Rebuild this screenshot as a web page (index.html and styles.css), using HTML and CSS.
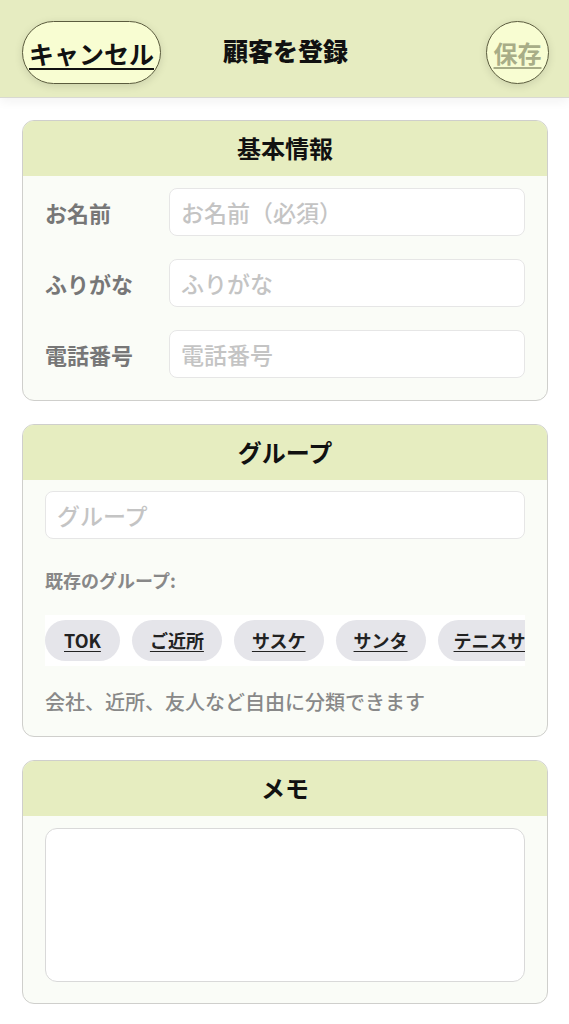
FILE: index.html
```html
<!DOCTYPE html>
<html lang="ja">
<head>
<meta charset="utf-8">
<title>顧客を登録</title>
<link rel="stylesheet" href="styles.css">
</head>
<body>
<header class="topbar">
  <div class="topbar-left"><button class="btn-cancel">キャンセル</button></div>
  <h1 class="topbar-title">顧客を登録</h1>
  <div class="topbar-right"><button class="btn-save">保存</button></div>
</header>
<main class="content">
  <section class="card">
    <h2 class="card-head">基本情報</h2>
    <div class="card-body form-grid">
      <label class="field-label">お名前</label>
      <input class="field-input" type="text" placeholder="お名前（必須）">
      <label class="field-label">ふりがな</label>
      <input class="field-input" type="text" placeholder="ふりがな">
      <label class="field-label">電話番号</label>
      <input class="field-input" type="text" placeholder="電話番号">
    </div>
  </section>
  <section class="card">
    <h2 class="card-head">グループ</h2>
    <div class="card-body group-body">
      <input class="field-input" type="text" placeholder="グループ">
      <div class="existing-label">既存のグループ:</div>
      <div class="chip-strip">
        <span class="chip chip-first">TOK</span>
        <span class="chip">ご近所</span>
        <span class="chip">サスケ</span>
        <span class="chip">サンタ</span>
        <span class="chip chip-last">テニスサ</span>
      </div>
      <p class="hint">会社、近所、友人など自由に分類できます</p>
    </div>
  </section>
  <section class="card">
    <h2 class="card-head">メモ</h2>
    <div class="card-body memo-body">
      <textarea class="memo"></textarea>
    </div>
  </section>
</main>
</body>
</html>
```
FILE: styles.css
```css
* { box-sizing: border-box; }
body {
  margin: 0;
  background: #ffffff;
  font-family: "Noto Sans CJK JP", "Noto Sans", sans-serif;
  color: #111;
}
.topbar {
  height: 98px;
  background: #e6ecc1;
  border-bottom: 1px solid #d9d9d2;
  box-shadow: 0 4px 10px rgba(0,0,0,0.05);
  display: grid;
  grid-template-columns: 1fr auto 1fr;
  align-items: center;
  padding: 8px 20px 0 22px;
}
.topbar-left { display: flex; justify-content: flex-start; }
.topbar-right { display: flex; justify-content: flex-end; }
.topbar-title {
  margin: 0 0 6px;
  font-size: 25px;
  font-weight: 900;
  color: #111;
}
.btn-cancel, .btn-save {
  font-family: inherit;
  font-weight: 700;
  text-decoration: underline;
  text-underline-offset: 4px;
  text-decoration-thickness: 2px;
  background: #f8fdd2;
  border: 1px solid #5b5c3e;
  box-shadow: 0 2px 8px rgba(0,0,0,0.12);
  padding: 0;
  cursor: pointer;
}
.btn-cancel {
  width: 139px;
  height: 63px;
  border-radius: 32px;
  font-size: 25px;
  color: #111;
}
.btn-save {
  width: 63px;
  height: 63px;
  border-radius: 50%;
  font-size: 24px;
  color: #a8ad87;
}
.content {
  padding: 22px 21px 22px 22px;
  display: flex;
  flex-direction: column;
  gap: 23px;
}
.card {
  border: 1.5px solid #cfcfcc;
  border-radius: 12px;
  background: #fafcf7;
  overflow: hidden;
}
.card-head {
  margin: 0;
  height: 55px;
  background: #e6edc0;
  font-size: 24px;
  font-weight: 700;
  text-align: center;
  line-height: 54px;
  color: #111;
}
.card-body {
  padding: 12px 22px 22px 22px;
}
.form-grid {
  display: grid;
  grid-template-columns: 124px 1fr;
  row-gap: 23px;
  align-items: center;
}
.field-label {
  font-size: 22px;
  font-weight: 700;
  color: #777;
}
.field-input {
  width: 100%;
  height: 48px;
  border: 1px solid #e6e6e6;
  border-radius: 8px;
  background: #fff;
  padding: 0 11px;
  font-family: inherit;
  font-size: 23px;
  color: #333;
  outline: none;
}
.field-input::placeholder { color: #c4c4c4; font-weight: 500; }
.group-body { padding-top: 11px; padding-bottom: 22px; }
.existing-label {
  margin-top: 29px;
  font-size: 18px;
  line-height: 24px;
  font-weight: 700;
  color: #888;
}
.chip-strip {
  margin-top: 23px;
  height: 51px;
  background: #fff;
  display: flex;
  gap: 12px;
  align-items: flex-start;
  padding-top: 5px;
  overflow: hidden;
  white-space: nowrap;
}
.chip {
  flex: none;
  height: 41px;
  line-height: 41px;
  padding: 0 18px;
  border-radius: 21px;
  background: #e5e5ea;
  font-size: 18px;
  font-weight: 700;
  color: #222;
  text-decoration: underline;
  text-underline-offset: 3px;
}
.chip-first { padding: 0 19px; }
.chip-last { padding: 0 40px 0 16px; }
.hint {
  margin: 24px 0 0;
  font-size: 20px;
  line-height: 24px;
  font-weight: 500;
  color: #888;
}
.memo-body { padding-top: 12px; padding-bottom: 21px; }
.memo {
  display: block;
  width: 100%;
  height: 154px;
  border: 1.5px solid #d9d9d9;
  border-radius: 12px;
  background: #fff;
  resize: none;
  outline: none;
  font-family: inherit;
  font-size: 18px;
}
```
